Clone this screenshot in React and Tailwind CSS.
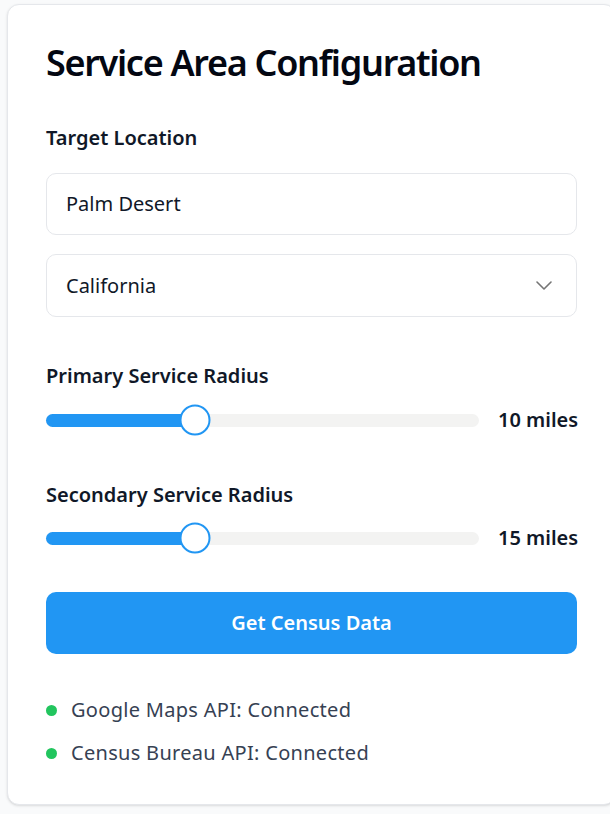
import React from "react";

function Slider({ pct, label }) {
  return (
    <div className="flex items-center gap-[19px]">
      <div className="relative h-[13px] flex-1 rounded-full bg-[#f3f3f2]">
        <div className="absolute left-0 top-0 h-full rounded-full bg-[#2196f3]" style={{ width: `${pct}%` }} />
        <div
          className="absolute top-1/2 h-[31px] w-[31px] -translate-x-1/2 -translate-y-1/2 rounded-full border-2 border-[#2196f3] bg-white"
          style={{ left: `${pct}%` }}
        />
      </div>
      <span className="w-[79px] text-[20px] font-semibold text-gray-900 whitespace-nowrap">{label}</span>
    </div>
  );
}

export default function App() {
  return (
    <div className="min-h-screen bg-gray-50 pl-[7px] pt-[4px] overflow-hidden" style={{ fontFamily: '"Noto Sans", sans-serif' }}>
      <div className="w-[609px] rounded-xl border border-gray-200 bg-white px-[38px] pt-[36px] pb-[36px] shadow-sm">
        <h1 className="text-[36px] leading-[44px] font-semibold tracking-[-1.3px] text-gray-950">Service Area Configuration</h1>

        <div className="mt-[38px] text-[20px] font-semibold text-gray-900">Target Location</div>
        <div className="mt-[20px] flex h-[62px] items-center rounded-[10px] border border-gray-200 px-[19px] text-[20px] text-gray-900">
          Palm Desert
        </div>
        <div className="mt-[19px] flex h-[63px] items-center justify-between rounded-[10px] border border-gray-200 pl-[19px] pr-[24px] text-[20px] text-gray-900">
          <span>California</span>
          <svg width="16" height="9" viewBox="0 0 16 9" fill="none" stroke="#757575" strokeWidth="1.6" strokeLinecap="round" strokeLinejoin="round">
            <path d="M1 1l7 7 7-7" />
          </svg>
        </div>

        <div className="mt-[44px] text-[20px] font-semibold text-gray-900">Primary Service Radius</div>
        <div className="mt-[14px]">
          <Slider pct={34.4} label="10 miles" />
        </div>

        <div className="mt-[45px] text-[20px] font-semibold text-gray-900">Secondary Service Radius</div>
        <div className="mt-[13px]">
          <Slider pct={34.4} label="15 miles" />
        </div>

        <button className="mt-[39px] flex h-[62px] w-full items-center justify-center rounded-[10px] bg-[#2196f3] text-[20px] font-semibold text-white">
          Get Census Data
        </button>

        <div className="mt-[41px] flex flex-col gap-[13px]">
          {["Google Maps API: Connected", "Census Bureau API: Connected"].map((t) => (
            <div key={t} className="flex items-center gap-[14px] text-[20px] tracking-[0.3px] text-gray-700">
              <span className="h-[11px] w-[11px] rounded-full bg-[#22c55e]" />
              <span>{t}</span>
            </div>
          ))}
        </div>
      </div>
    </div>
  );
}
